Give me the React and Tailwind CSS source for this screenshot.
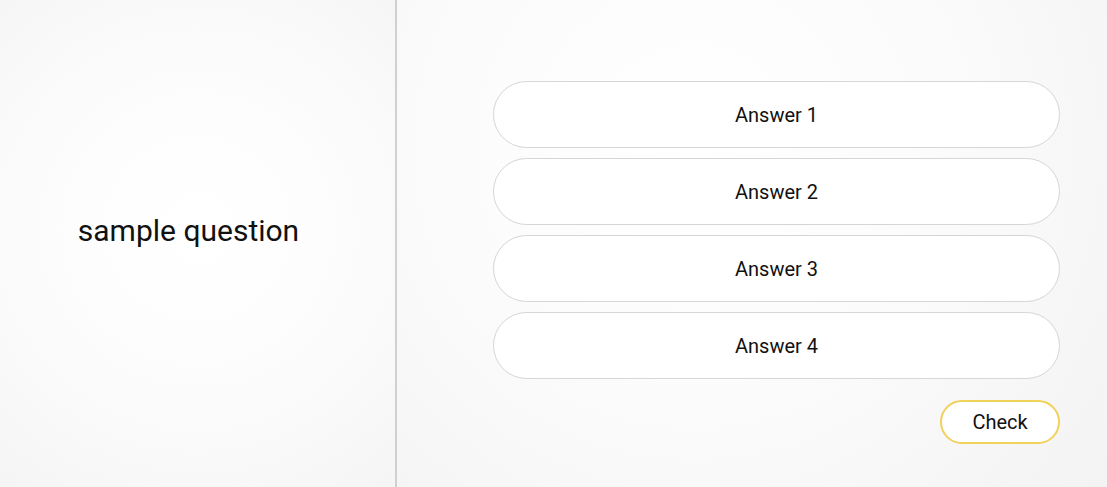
export default function App() {
  const answers = ["Answer 1", "Answer 2", "Answer 3", "Answer 4"];
  return (
    <div
      className="flex h-[487px] w-full bg-[#f5f5f5]"
      style={{ fontFamily: "Roboto, 'Liberation Sans', sans-serif" }}
    >
      <div className="flex w-[395px] shrink-0 items-center justify-center pr-[18px] pb-[26px] bg-[radial-gradient(circle_at_50%_47%,#ffffff_0%,#fdfdfd_40%,#f5f5f5_100%)]">
        <p className="text-[30px] text-[#111]">sample question</p>
      </div>
      <div className="w-[2px] shrink-0 bg-[#d0d0d0]" />
      <div className="flex flex-1 flex-col pl-[96px] pr-[47px] pt-[81px] bg-[radial-gradient(circle_at_42%_30%,#ffffff_0%,#fcfcfc_40%,#f3f3f3_100%)]">
        <div className="flex flex-col gap-[10px]">
          {answers.map((a) => (
            <button
              key={a}
              className="h-[67px] w-full rounded-[34px] border border-[#d6d6d6] bg-white text-[20px] text-[#111]"
            >
              {a}
            </button>
          ))}
        </div>
        <div className="mt-[21px] flex justify-end">
          <button className="h-[44px] w-[120px] rounded-full border-2 border-[#f2d15a] bg-white text-[20px] text-[#111]">
            Check
          </button>
        </div>
      </div>
    </div>
  );
}
